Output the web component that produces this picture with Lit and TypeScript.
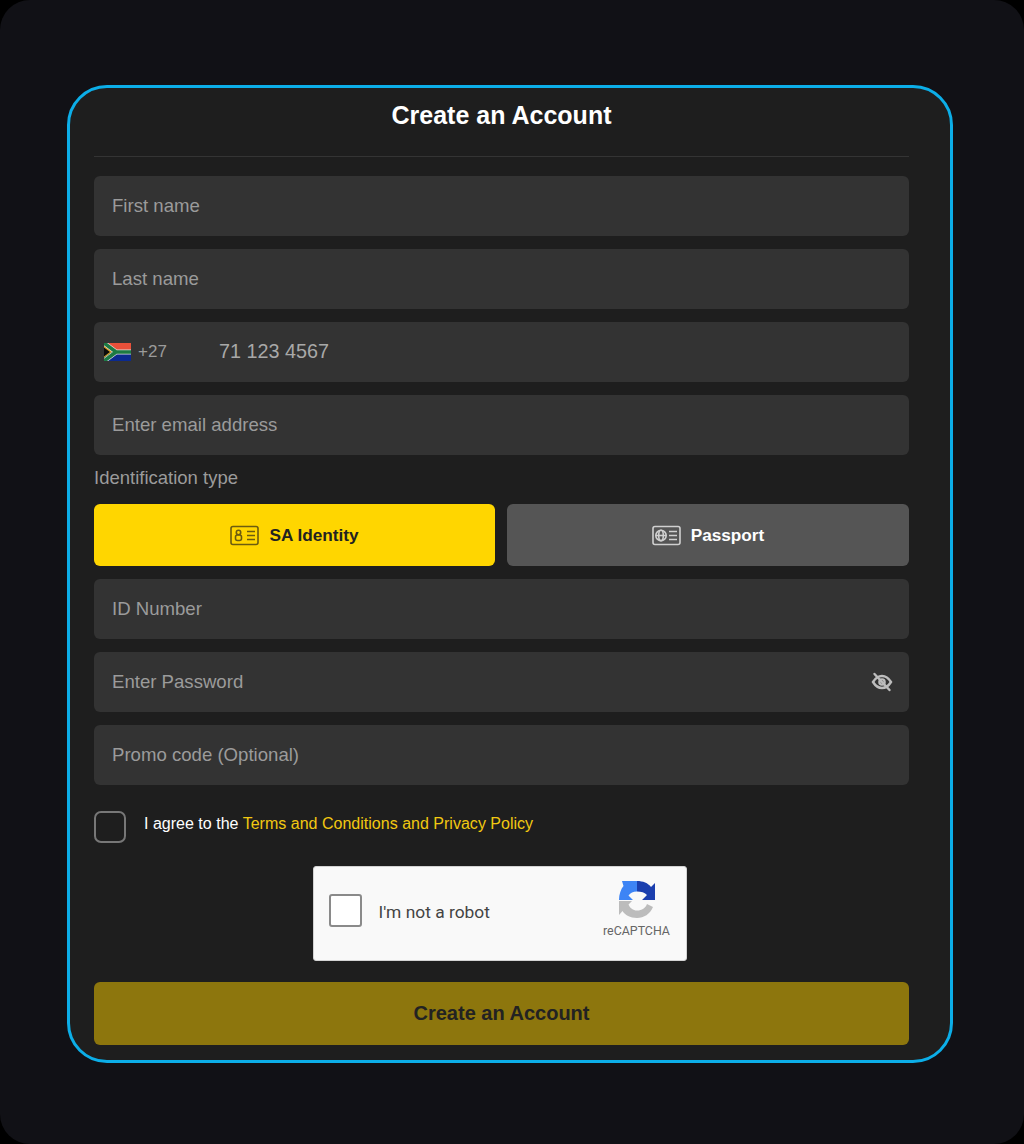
import { LitElement, html, svg, css } from "lit";
import { customElement } from "lit/decorators.js";

@customElement("app-root")
export class AppRoot extends LitElement {
  static styles = css`
    :host { display: block; width: 1024px; height: 1144px; background: #000; font-family: "Liberation Sans", Arial, sans-serif; }
    * { box-sizing: border-box; }
    .page { width: 1024px; height: 1144px; background: #111116; border-radius: 30px; padding: 85px 71px 0 67px; }
    .card { width: 886px; height: 978px; border: 3px solid #0caee8; border-radius: 40px; background: #1e1e1e; padding: 0 41px 0 24px; display: flex; flex-direction: column; }
    h1 { margin: 0; height: 69px; padding-top: 10px; border-bottom: 1px solid #343434; color: #fff; font-size: 25px; line-height: 34px; font-weight: 700; text-align: center; }
    .fields { margin-top: 19px; display: flex; flex-direction: column; gap: 12.6px; }
    .field { height: 60.3px; background: #333; border-radius: 6px; display: flex; align-items: center; padding: 0 18px; color: #9b9b9b; font-size: 18.6px; position: relative; }
    .phone { padding-left: 10px; }
    .flag { width: 27px; height: 18px; display: block; }
    .code { font-size: 17px; margin-left: 7px; width: 81px; }
    .num { font-size: 19.8px; color: #a8a8a8; }
    .label { color: #9b9b9b; font-size: 18.5px; line-height: 22px; height: 37px; display: flex; align-items: center; margin-top: -12.6px; margin-bottom: -12.6px; padding-top: 10px; }
    .idrow { display: grid; grid-template-columns: 401px 402px; gap: 12px; margin-top: 12px; }
    .idbtn { height: 62.5px; border-radius: 6px; display: flex; align-items: center; justify-content: center; gap: 10px; font-size: 17.2px; font-weight: 700; }
    .sa { background: #ffd600; color: #222; }
    .pass { background: #555; color: #fff; }
    .idbtn svg { width: 29px; height: 21px; display: block; }
    .eye { position: absolute; right: 16px; top: 50%; margin-top: -11px; width: 22px; height: 22px; }
    .agree { display: flex; align-items: center; gap: 18px; margin-top: 26px; height: 32px; font-size: 16.05px; color: #fff; }
    .agree span { padding-bottom: 8px; }
    .box { width: 32px; height: 32px; border: 2px solid #777; border-radius: 7px; }
    .agree b { font-weight: 400; color: #f2c811; }
    .captcha-wrap { display: flex; justify-content: center; margin-top: 23px; padding-right: 4px; }
    .captcha { width: 374px; height: 95px; background: #f9f9f9; border-radius: 3px; border: 1px solid #d3d3d3; display: flex; align-items: center; padding: 0 15px; position: relative; }
    .cbox { width: 33px; height: 33px; background: #fff; border: 2px solid #8a8a8a; border-radius: 3px; margin-bottom: 6px; }
    .clabel { margin-left: 17px; margin-bottom: 4px; color: #444; font-family: Roboto, sans-serif; font-size: 17.4px; }
    .logo { position: absolute; right: 15px; top: 13px; width: 68px; display: flex; flex-direction: column; align-items: center; }
    .logo svg { width: 40px; height: 40px; display: block; }
    .logo span { font-family: Roboto, sans-serif; font-size: 12.4px; line-height: 15px; color: #666; margin-top: 3px; white-space: nowrap; }
    .submit { margin-top: 21px; height: 63px; background: #8d760d; border-radius: 6px; display: flex; align-items: center; justify-content: center; color: #222; font-size: 20px; font-weight: 700; }
  `;

  idIcon(color: string, globe: boolean) {
    return html`<svg viewBox="0 0 29 21" fill="none" stroke=${color} stroke-width="1.6">
      <rect x="1" y="1.500" width="27" height="18" rx="2"></rect>
      ${globe
        ? svg`<circle cx="9" cy="10.500" r="5.200"></circle><ellipse cx="9" cy="10.500" rx="2.300" ry="5.200"></ellipse><path d="M3.800 10.500h10.400"></path>`
        : svg`<rect x="5.500" y="10" width="6" height="5.500" rx="2"></rect><circle cx="8.500" cy="7.500" r="2.200"></circle>`}
      <path d="M17 6.500h8M17 10.500h8M17 14.500h8"></path>
    </svg>`;
  }

  render() {
    return html`<div class="page"><div class="card">
      <h1>Create an Account</h1>
      <div class="fields">
        <div class="field">First name</div>
        <div class="field">Last name</div>
        <div class="field phone">
          <svg class="flag" viewBox="0 0 27 18" fill="none">
            <rect width="27" height="9" fill="#e8503a"></rect>
            <rect y="9" width="27" height="9" fill="#0b2a8f"></rect>
            <path d="M0 0L12 9H27M0 18L12 9" stroke="#dcdcdc" stroke-width="5"></path>
            <path d="M0 0L12 9H27M0 18L12 9" stroke="#1c7a43" stroke-width="3.600"></path>
            <path d="M0 3.200L7.800 9L0 14.800z" fill="#d8a820"></path>
            <path d="M0 4.500L6 9L0 13.500z" fill="#0c0c0c"></path>
          </svg>
          <span class="code">+27</span>
          <span class="num">71 123 4567</span>
        </div>
        <div class="field">Enter email address</div>
        <div class="label">Identification type</div>
        <div class="idrow">
          <div class="idbtn sa">${this.idIcon("#6b5c10", false)}SA Identity</div>
          <div class="idbtn pass">${this.idIcon("#d0d0d0", true)}Passport</div>
        </div>
        <div class="field">ID Number</div>
        <div class="field">Enter Password
          <svg class="eye" viewBox="0 0 22 22" fill="none" stroke="#bdbdbd" stroke-width="2.400" stroke-linecap="round">
            <path d="M2 11c2.500-4 5.500-6 9-6s6.500 2 9 6c-2.500 4-5.500 6-9 6s-6.500-2-9-6z"></path>
            <circle cx="11" cy="11" r="2.600"></circle>
            <path d="M3.500 3l15 16"></path>
          </svg>
        </div>
        <div class="field">Promo code (Optional)</div>
      </div>
      <div class="agree"><div class="box"></div><span>I agree to the <b>Terms and Conditions and Privacy Policy</b></span></div>
      <div class="captcha-wrap"><div class="captcha">
        <div class="cbox"></div>
        <span class="clabel">I'm not a robot</span>
        <div class="logo">
          <svg viewBox="0 0 40 40">
            <path d="M2 21H15L11.500 24.500C13 28 16 30.500 20 30.500C25 30.500 28.500 28 30 24L36 27C33 34 27 38 20 38C13 38 8 35 5.500 31L2 35Z" fill="#bcbcbc"></path>
            <path d="M2 20C2 14 4 9 6.500 6L5 1H20V11.500C16 11.500 13.500 13 11.500 15.500L16 20Z" fill="#3d84f5"></path>
            <path d="M20 1C26 1 31 3 34 7L38 3V20H25L30 15C28 12.500 24 11.500 20 11.500Z" fill="#1b3fae"></path>
          </svg>
          <span>reCAPTCHA</span>
        </div>
      </div></div>
      <div class="submit">Create an Account</div>
    </div></div>`;
  }
}
